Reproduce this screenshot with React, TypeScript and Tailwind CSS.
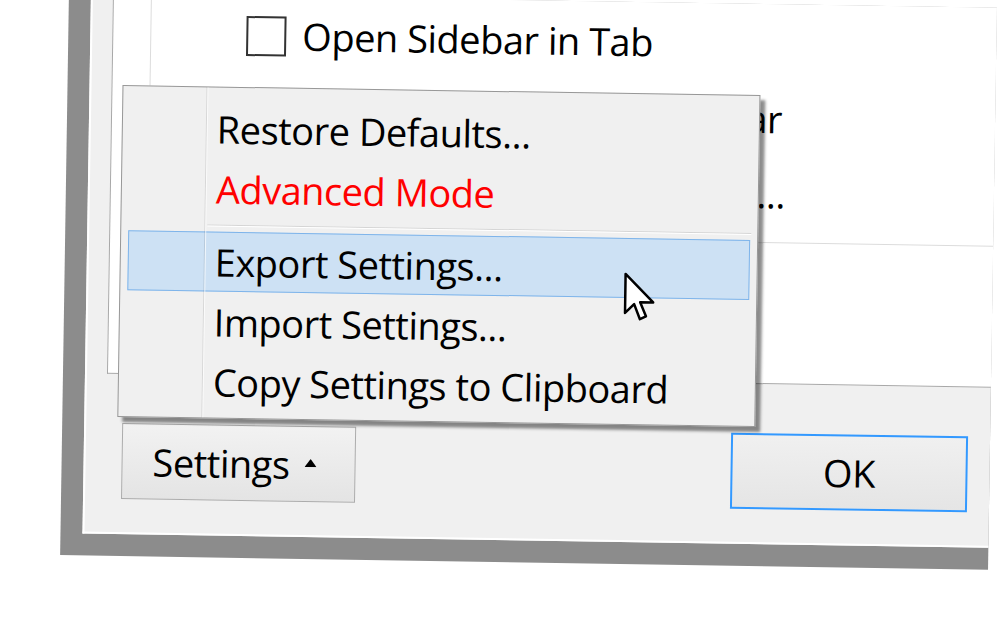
import type { ReactNode } from "react";

function Checkbox() {
  return <span className="block h-[40px] w-[40px] shrink-0 border-2 border-[#333] bg-white" />;
}

function MenuItem({ children, className = "" }: { children: ReactNode; className?: string }) {
  return (
    <div className={`flex h-[60px] items-center whitespace-nowrap ${className}`}>{children}</div>
  );
}

function Cursor() {
  return (
    <svg className="absolute left-[623px] top-[270px]" width="34" height="52" viewBox="0 0 34 52">
      <path
        d="M2 2 L2 41 L11 32 L17 47 L23 44 L17 30 L30 30 Z"
        fill="#fff"
        stroke="#000"
        strokeWidth="2.5"
        strokeLinejoin="round"
      />
    </svg>
  );
}

export default function App() {
  return (
    <div className="relative h-[624px] w-[1000px] overflow-hidden bg-white font-['Open_Sans',sans-serif] text-[38px] tracking-[-0.5px] text-black">
      <div className="relative h-[624px] w-[1000px] rotate-[0.9deg]">
        {/* window frame */}
        <div className="ml-[64px] h-[562px] w-[928px] bg-[#8c8c8c] pb-[22px] pl-[22px]">
          <div className="flex h-full flex-col border-b-2 border-l-2 border-white bg-[#f0f0f0]">
            {/* tab page */}
            <div className="ml-[20px] h-[380px] border-b border-l border-[#a8a8a8] bg-white">
              <div className="ml-[37px] h-[239px] border-b border-l border-[#dcdcdc] pl-[95px] pt-[2px]">
                <div className="flex h-[75px] items-center gap-[16px]">
                  <Checkbox />
                  <span className="whitespace-nowrap">Open Sidebar in Tab</span>
                </div>
                <div className="flex h-[75px] items-center gap-[16px]">
                  <Checkbox />
                  <span className="w-[481px] whitespace-nowrap text-right">Hide Tab Bar</span>
                </div>
                <div className="flex h-[75px] items-center gap-[16px]">
                  <Checkbox />
                  <span className="w-[485px] whitespace-nowrap text-right">Shortcuts...</span>
                </div>
              </div>
            </div>

            {/* buttons */}
            <div className="mt-[49px] flex items-start justify-between pl-[36px] pr-[22px]">
              <button className="flex h-[76px] w-[234px] items-center gap-[15px] border border-[#acacac] bg-gradient-to-b from-[#f2f2f2] to-[#e4e4e4] pl-[30px]">
                <span>Settings</span>
                <svg width="12" height="8" viewBox="0 0 12 8" className="mt-[-2px]">
                  <path d="M6 0 L12 8 L0 8 Z" fill="#000" />
                </svg>
              </button>
              <button className="flex h-[76px] w-[237px] items-center justify-center border-2 border-[#3399ff] bg-gradient-to-b from-[#f0f0f0] to-[#e5e5e5]">
                OK
              </button>
            </div>
          </div>
        </div>

        {/* popup menu */}
        <div className="absolute left-[119px] top-[91px] h-[332px] w-[638px] border border-[#979797] bg-[#f0f0f0] pt-[11px] shadow-[5px_5px_3px_rgba(0,0,0,0.45)]">
          <div className="absolute bottom-0 left-[83px] top-0 w-px bg-black/10" />
          <div className="absolute bottom-0 left-[84px] top-0 w-px bg-white/70" />
          <MenuItem className="pl-[94px]">Restore Defaults...</MenuItem>
          <MenuItem className="pl-[94px] text-[#ff0000]">Advanced Mode</MenuItem>
          <div className="flex h-[13px] items-center pl-[86px] pr-[6px]">
            <div className="h-[2px] w-full border-b border-t border-b-white border-t-[#d5d5d5]" />
          </div>
          <MenuItem className="mx-[7px] border border-[#7eb4ea] bg-[#cde1f4] pl-[86px]">
            Export Settings...
          </MenuItem>
          <MenuItem className="pl-[94px]">Import Settings...</MenuItem>
          <MenuItem className="pl-[94px]">Copy Settings to Clipboard</MenuItem>
        </div>

        <Cursor />
      </div>
    </div>
  );
}
